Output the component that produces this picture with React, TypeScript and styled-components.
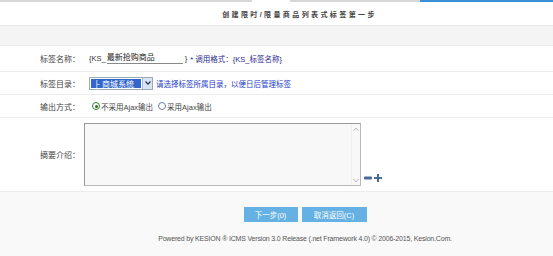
import React from "react";
import styled, { createGlobalStyle } from "styled-components";

const Global = createGlobalStyle`
  html, body { margin: 0; padding: 0; background: #fff; }
  body { font-family: "Liberation Sans", "Noto Sans CJK SC", sans-serif; font-size: 8px; color: #333; }
  * { box-sizing: border-box; }
`;

const Page = styled.div`
  width: 553px;
  height: 256px;
  overflow: hidden;
  display: flex;
  flex-direction: column;
`;

const TopStrip = styled.div`
  height: 2px;
  display: flex;
`;

const Seg = styled.div<{ $w: number; $c: string }>`
  width: ${(p) => p.$w}px;
  flex: ${(p) => (p.$w === 0 ? 1 : "none")};
  background: ${(p) => p.$c};
`;

const Title = styled.div`
  height: 24px;
  display: flex;
  align-items: center;
  justify-content: center;
  padding-left: 46px;
  font-size: 7px;
  font-weight: bold;
  letter-spacing: 2.4px;
  color: #444;
  border-bottom: 1px solid #e8e8e8;
`;

const Band = styled.div`
  height: 20px;
  background: #f4f4f4;
  border-bottom: 1px solid #ececec;
`;

const Row = styled.div<{ $h: number }>`
  height: ${(p) => p.$h}px;
  display: grid;
  grid-template-columns: 83px 1fr;
  align-items: center;
  border-bottom: 1px solid #ececec;
`;

const Label = styled.div`
  text-align: right;
  padding-right: 3px;
  font-size: 8px;
  color: #444;
`;

const Field = styled.div`
  display: flex;
  align-items: center;
  padding-left: 6px;
  font-size: 7.5px;
  color: #333;
`;

const NameInput = styled.span`
  display: inline-block;
  width: 76px;
  margin: 0 2px 0 1px;
  border-bottom: 1px solid #888;
  font-size: 8px;
  color: #222;
  line-height: 10px;
`;

const Navy = styled.span`
  color: #2a2a8a;
  margin-left: 3px;
`;

const Select = styled.div`
  display: flex;
  align-items: stretch;
  height: 13px;
  width: 64px;
  border: 1px solid #9ab;
`;

const SelectValue = styled.div`
  flex: 1;
  background: #3366cc;
  color: #fff;
  font-size: 8px;
  display: flex;
  align-items: center;
  padding-left: 3px;
  margin: 1px;
`;

const SelectArrow = styled.div`
  width: 10px;
  background: #d8e4f4;
  border-left: 1px solid #a8bcd8;
  display: flex;
  align-items: center;
  justify-content: center;
`;

const Hint = styled.span`
  color: #1a3cc8;
  margin-left: 3px;
  font-size: 7.5px;
`;

const Radio = styled.span<{ $on?: boolean }>`
  display: inline-flex;
  align-items: center;
  justify-content: center;
  width: 8px;
  height: 8px;
  border-radius: 50%;
  border: 1px solid ${(p) => (p.$on ? "#3a7a3a" : "#6a7fa8")};
  margin: 0 1px 0 3px;
  &::after {
    content: "";
    width: 3px;
    height: 3px;
    border-radius: 50%;
    background: ${(p) => (p.$on ? "#2a6a2a" : "transparent")};
  }
`;

const RadioText = styled.span`
  font-size: 7.5px;
  color: #444;
  margin-right: 2px;
`;

const AreaRow = styled.div`
  height: 74px;
  display: grid;
  grid-template-columns: 83px 1fr;
  align-items: center;
  border-bottom: 1px solid #ececec;
`;

const AreaField = styled.div`
  display: flex;
  align-items: flex-end;
  padding-left: 1px;
`;

const Area = styled.div`
  width: 277px;
  height: 63px;
  border: 1px solid #b8b8b8;
  border-top-color: #999;
  border-left-color: #999;
  background: #f8f8f8;
  display: flex;
  justify-content: flex-end;
`;

const ScrollCol = styled.div`
  width: 9px;
  display: flex;
  flex-direction: column;
  justify-content: space-between;
  align-items: center;
  padding: 3px 0 2px;
  border-left: 1px solid #f0f0f0;
`;

const Tools = styled.div`
  display: flex;
  align-items: center;
  gap: 2px;
  margin: 0 0 4px 3px;
`;

const Bottom = styled.div`
  flex: 1;
  background: #f9f9f9;
  display: flex;
  flex-direction: column;
  align-items: center;
  padding-top: 15px;
  padding-left: 57px;
`;

const Buttons = styled.div`
  display: flex;
  gap: 4px;
`;

const Btn = styled.div<{ $w: number }>`
  width: ${(p) => p.$w}px;
  height: 15px;
  background: #66b1e3;
  color: #fff;
  font-size: 7.5px;
  display: flex;
  align-items: center;
  justify-content: center;
`;

const Footer = styled.div`
  margin-top: 13px;
  font-size: 7px;
  color: #555;
  letter-spacing: -0.18px;
  white-space: nowrap;
`;

const Arrow = ({ up }: { up?: boolean }) => (
  <svg width="6" height="5" viewBox="0 0 6 5">
    <path d={up ? "M0.5 4 L3 1 L5.5 4" : "M0.5 1 L3 4 L5.5 1"} fill="none" stroke="#bbb" strokeWidth="1" />
  </svg>
);

export default function App() {
  return (
    <Page>
      <Global />
      <TopStrip>
        <Seg $w={252} $c="#d6d6d6" />
        <Seg $w={38} $c="#fff" />
        <Seg $w={130} $c="#d6d6d6" />
        <Seg $w={0} $c="#3b8fd6" />
      </TopStrip>
      <Title>创建限时/限量商品列表式标签第一步</Title>
      <Band />
      <Row $h={26}>
        <Label>标签名称：</Label>
        <Field>
          {"{KS_"}
          <NameInput>最新抢购商品</NameInput>
          {"}"}
          <Navy>* 调用格式：{"{KS_标签名称}"}</Navy>
        </Field>
      </Row>
      <Row $h={23}>
        <Label>标签目录：</Label>
        <Field>
          <Select>
            <SelectValue>├ 商城系统</SelectValue>
            <SelectArrow>
              <svg width="6" height="4" viewBox="0 0 6 4">
                <path d="M0.5 0.5 L3 3.2 L5.5 0.5" fill="none" stroke="#335" strokeWidth="1.2" />
              </svg>
            </SelectArrow>
          </Select>
          <Hint>请选择标签所属目录，以便日后管理标签</Hint>
        </Field>
      </Row>
      <Row $h={23}>
        <Label>输出方式：</Label>
        <Field>
          <Radio $on />
          <RadioText>不采用Ajax输出</RadioText>
          <Radio />
          <RadioText>采用Ajax输出</RadioText>
        </Field>
      </Row>
      <AreaRow>
        <Label>摘要介绍：</Label>
        <AreaField>
          <Area>
            <ScrollCol>
              <Arrow up />
              <Arrow />
            </ScrollCol>
          </Area>
          <Tools>
            <svg width="8" height="4" viewBox="0 0 8 4">
              <rect x="0" y="0.5" width="8" height="3" rx="1" fill="#4a6a9a" />
            </svg>
            <svg width="8" height="8" viewBox="0 0 8 8">
              <path d="M3 0 H5 V3 H8 V5 H5 V8 H3 V5 H0 V3 H3 Z" fill="#4a6a9a" />
            </svg>
          </Tools>
        </AreaField>
      </AreaRow>
      <Bottom>
        <Buttons>
          <Btn $w={54}>下一步(0)</Btn>
          <Btn $w={65}>取消返回(C)</Btn>
        </Buttons>
        <Footer>Powered by KESION ® ICMS Version 3.0 Release (.net Framework 4.0) © 2006-2015, Kesion.Com.</Footer>
      </Bottom>
    </Page>
  );
}
